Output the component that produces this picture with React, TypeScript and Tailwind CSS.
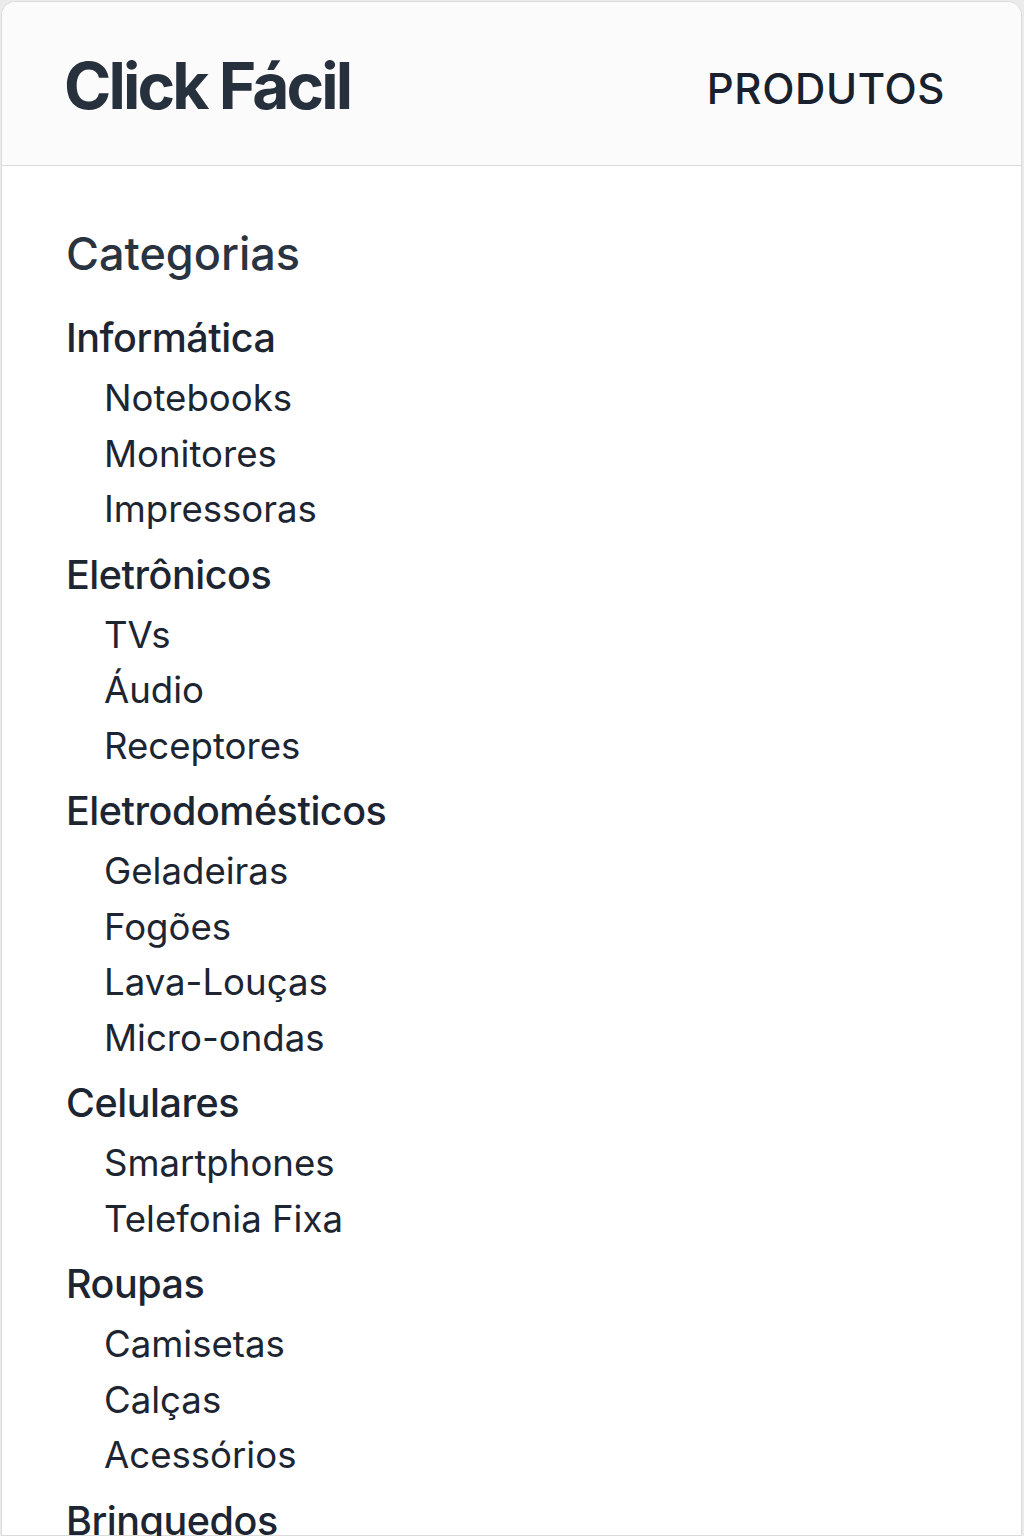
const categories: { name: string; items: string[] }[] = [
  { name: "Informática", items: ["Notebooks", "Monitores", "Impressoras"] },
  { name: "Eletrônicos", items: ["TVs", "Áudio", "Receptores"] },
  {
    name: "Eletrodomésticos",
    items: ["Geladeiras", "Fogões", "Lava-Louças", "Micro-ondas"],
  },
  { name: "Celulares", items: ["Smartphones", "Telefonia Fixa"] },
  { name: "Roupas", items: ["Camisetas", "Calças", "Acessórios"] },
  { name: "Bringuedos", items: ["Bonecas", "Carrinhos", "Jogos"] },
];

export default function App() {
  return (
    <div className="h-[1536px] overflow-hidden bg-[#ebebeb] pt-px pl-px pr-[2px] font-['Inter','Noto_Sans',sans-serif]">
      <div className="h-full rounded-t-[14px] border border-[#dadada] bg-white">
        <header className="flex h-[164px] items-center justify-between rounded-t-[14px] border-b border-[#dadada] bg-[#fbfbfb] pl-[62px] pr-[76px]">
          <h1 className="pt-[4px] text-[64px] font-bold leading-none tracking-[-0.045em] text-[#27313d]">
            Click Fácil
          </h1>
          <nav className="pt-[10px] text-[42px] font-medium leading-none tracking-[0.015em] text-[#18212d]">
            PRODUTOS
          </nav>
        </header>

        <main className="pl-[64px] pt-[62px]">
          <h2 className="text-[45px] font-medium leading-[52px] text-[#2a3441]">
            Categorias
          </h2>

          <ul className="mt-[32px] flex flex-col gap-[11px]">
            {categories.map((cat) => (
              <li key={cat.name}>
                <h3 className="text-[39.5px] font-medium leading-[52px] tracking-[-0.012em] text-[#1c2531]">
                  {cat.name}
                </h3>
                <ul className="mt-[7px] pl-[38px]">
                  {cat.items.map((item) => (
                    <li
                      key={item}
                      className="text-[36.6px] leading-[55.5px] text-[#1c2531]"
                    >
                      {item}
                    </li>
                  ))}
                </ul>
              </li>
            ))}
          </ul>
        </main>
      </div>
    </div>
  );
}
